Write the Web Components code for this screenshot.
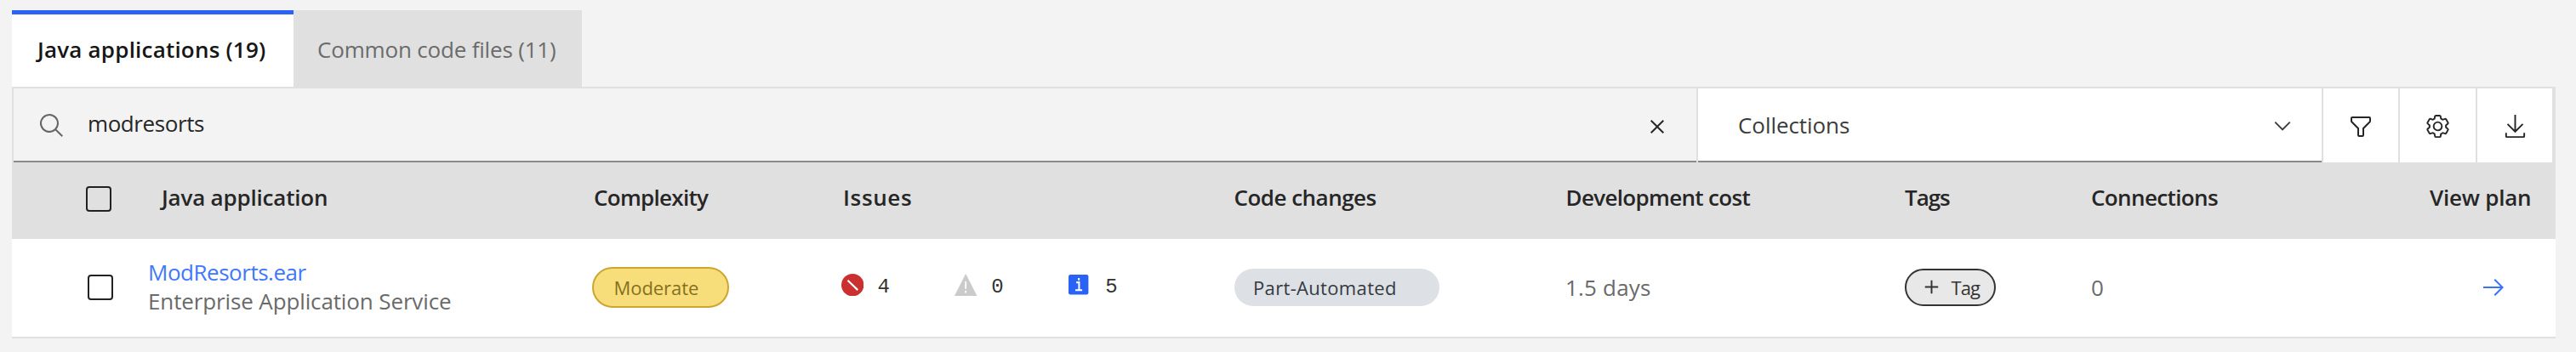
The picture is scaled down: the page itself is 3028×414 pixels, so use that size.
<!DOCTYPE html>
<html lang="en">
<head>
<meta charset="utf-8">
<title>Java applications</title>
<style>
html,body{margin:0;height:414px;background:#f3f3f3;overflow:hidden}
body{font:400 26px/36px "Open Sans","Noto Sans",sans-serif;color:#161616}
</style>
</head>
<body>
<app-panel></app-panel>
<script>
const define = (name, html, init) => {
  const t = document.createElement('template');
  t.innerHTML = html;
  customElements.define(name, class extends HTMLElement {
    constructor() {
      super();
      this.attachShadow({mode: 'open'}).append(t.content.cloneNode(true));
    }
    connectedCallback() { if (init) init(this, this.shadowRoot); }
  });
};

/* Label whose tracking is adjusted so that its ink spans the given width. */
const ctx = document.createElement('canvas').getContext('2d');
define('fit-text', `<style>:host{display:block;white-space:pre;flex:none}</style><slot></slot>`, el => {
  const cs = getComputedStyle(el), s = el.textContent;
  ctx.font = `${cs.fontWeight} ${cs.fontSize} ${cs.fontFamily}`;
  const m = ctx.measureText(s);
  const ink = m.actualBoundingBoxLeft + m.actualBoundingBoxRight;
  const w = +el.getAttribute('w');
  el.style.marginLeft = m.actualBoundingBoxLeft + 'px';
  if (s.length > 1) el.style.letterSpacing = (w - ink) / (s.length - 1) + 'px';
});

const icons = {
  search: '<path d="M29 27.586l-7.552-7.552a11.018 11.018 0 1 0-1.414 1.414L27.586 29zM4 13a9 9 0 1 1 9 9 9.01 9.01 0 0 1-9-9z"/>',
  close: '<path d="M24 9.4L22.6 8 16 14.6 9.4 8 8 9.4 14.6 16 8 22.6 9.4 24 16 17.4 22.6 24 24 22.6 17.4 16z"/>',
  chevron: '<path d="M16 22L6 12l1.4-1.4 8.6 8.6 8.6-8.6L26 12z"/>',
  filter: '<path d="M18 28h-4a2 2 0 0 1-2-2v-7.59L4.59 11A2 2 0 0 1 4 9.59V6a2 2 0 0 1 2-2h20a2 2 0 0 1 2 2v3.59a2 2 0 0 1-.59 1.41L20 18.41V26a2 2 0 0 1-2 2zM6 6v3.59l8 8V26h4v-8.41l8-8V6z"/>',
  settings: '<path d="M27 16.76V15.23l1.92-1.68A2 2 0 0 0 29.3 11L26.94 7a2 2 0 0 0-1.73-1 2 2 0 0 0-.64.1l-2.43.82a11.35 11.35 0 0 0-1.31-.75l-.51-2.52a2 2 0 0 0-2-1.61h-4.68a2 2 0 0 0-2 1.61l-.51 2.52a11.48 11.48 0 0 0-1.32.75l-2.38-.86A2 2 0 0 0 6.79 6a2 2 0 0 0-1.73 1L2.7 11a2 2 0 0 0 .41 2.51L5 15.24v1.53l-1.89 1.68A2 2 0 0 0 2.7 21l2.36 4a2 2 0 0 0 1.73 1 2 2 0 0 0 .64-.1l2.43-.82a11.35 11.35 0 0 0 1.31.75l.51 2.52a2 2 0 0 0 2 1.61h4.72a2 2 0 0 0 2-1.61l.51-2.52a11.48 11.48 0 0 0 1.32-.75l2.42.82a2 2 0 0 0 .64.1 2 2 0 0 0 1.73-1l2.28-4a2 2 0 0 0-.41-2.51zM25.21 24l-3.43-1.16a8.86 8.86 0 0 1-2.71 1.57L18.36 28h-4.72l-.71-3.55a9.36 9.36 0 0 1-2.7-1.57L6.79 24l-2.36-4 2.72-2.4a8.9 8.9 0 0 1 0-3.13L4.43 12l2.36-4 3.43 1.16a8.86 8.86 0 0 1 2.71-1.57L13.64 4h4.72l.71 3.55a9.36 9.36 0 0 1 2.7 1.57L25.21 8l2.36 4-2.72 2.4a8.9 8.9 0 0 1 0 3.13L27.57 20z"/><path d="M16 22a6 6 0 1 1 6-6 5.94 5.94 0 0 1-6 6zm0-10a3.91 3.91 0 0 0-4 4 3.91 3.91 0 0 0 4 4 3.91 3.91 0 0 0 4-4 3.91 3.91 0 0 0-4-4z"/>',
  download: '<path d="M26 24v4H6v-4H4v4a2 2 0 0 0 2 2h20a2 2 0 0 0 2-2v-4zM26 14l-1.41-1.41L17 20.17V2h-2v18.17l-7.59-7.58L6 14l10 10z"/>',
  add: '<path d="M17 15V8h-2v7H8v2h7v7h2v-7h7v-2z"/>',
  arrow: '<path d="M18 6l-1.43 1.393L24.15 15H4v2h20.15l-7.58 7.573L18 26l10-10z"/>',
  error: '<circle cx="16" cy="16" r="16" fill="#cb3030"/><path d="M9 9.4L23.4 23.2" stroke="#fff" stroke-width="2.6"/>',
  warning: '<path d="M16 .8L31.6 31.6H.4z" fill="#cbcbcb" stroke="#cbcbcb" stroke-linejoin="round"/><path d="M16 11v10.5M16 24.2v3" stroke="#fff" stroke-width="2.2"/>',
  info: '<rect x="0" y="0" width="32" height="32" rx="3" fill="#2962f5"/><path d="M12.5 12.5h4.5v12M11 25h11M16.6 5.5v3.6" stroke="#fff" stroke-width="2.8" fill="none"/>'
};
define('ui-icon', `<style>:host{display:block;flex:none}svg{display:block}</style><svg viewBox="0 0 32 32" fill="currentColor"></svg>`, (el, r) => {
  const svg = r.querySelector('svg'), s = el.getAttribute('size') || 32;
  svg.setAttribute('width', s); svg.setAttribute('height', s);
  svg.innerHTML = icons[el.getAttribute('name')];
});

define('ui-checkbox', `<style>:host{display:block;box-sizing:border-box;width:30px;height:30px;border:2px solid #222;border-radius:4px;flex:none}</style>`);

define('ui-tab', `<style>
:host{display:flex;box-sizing:border-box;height:91px;background:#e0e0e0;color:#6b6b6b;padding:28px 0 0 29px;border-top:0 solid #2b63f6}
:host([active]){background:#fff;color:#161616;font-weight:540;border-top-width:5px;padding-top:23px;padding-left:28px;height:90px}
</style><slot></slot>`);

define('ui-pill', `<style>
:host{display:flex;box-sizing:border-box;align-items:center;height:44px;border-radius:24px;font-size:22px;line-height:30px;background:#dde1e6;color:#343a3f}
:host([kind=moderate]){height:48px;background:#f7de7b;border:2px solid #cda62f;color:#85701f}
:host([kind=tag]){background:#e8e8e8;border:2px solid #333;color:#333}
</style><slot></slot>`);

define('issue-count', `<style>
:host{display:flex;align-items:center;font:24px/30px "Liberation Mono",monospace;color:#333}
.i{width:44px;margin-top:-5px;flex:none}
</style><div class="i"><slot name="icon"></slot></div><slot></slot>`);

define('tool-button', `<style>:host{display:flex;box-sizing:border-box;align-items:center;justify-content:center;background:#fff;border-left:2px solid #e0e0e0;color:#262626;padding-top:2px}</style><slot></slot>`);

define('search-bar', `<style>
:host{display:grid;grid-template-columns:1980px 735px 90px 91px 90px;height:87px;border:solid #e0e0e0;border-width:2px 4px 0 0;width:2986px;box-sizing:content-box}
.search,.collections{display:flex;box-sizing:border-box;align-items:center;border-left:2px solid #e0e0e0;position:relative}
.search{padding-left:29px;color:#262626}
.search ui-icon:first-child{color:#666;margin-top:1px}
.search fit-text{padding:0 0 5px 28px}
.close{margin:3px 30px 0 auto}
.collections{background:#fff;padding-left:48px;color:#3c3c3c}
.collections fit-text{padding-bottom:2px}
.chev{margin:0 31px 0 auto}
.line{box-shadow:inset 0 -2px #8a8a8a}
</style>
<div class="search line"><ui-icon name="search"></ui-icon><fit-text w="135">modresorts</fit-text><ui-icon class="close" name="close"></ui-icon></div>
<div class="collections line"><fit-text w="130">Collections</fit-text><ui-icon class="chev" name="chevron" size="30"></ui-icon></div>
<tool-button><ui-icon name="filter"></ui-icon></tool-button>
<tool-button><ui-icon name="settings" size="31"></ui-icon></tool-button>
<tool-button><ui-icon name="download" size="31"></ui-icon></tool-button>`);

define('table-head', `<style>
:host{display:grid;grid-template-columns:174px 511px 294px 458.5px 391px 396.5px 220px 397px 148px;box-sizing:border-box;height:90px;background:#e0e0e0;padding-top:23px;font-weight:580;color:#262626}
ui-checkbox{margin:5px 0 0 87px}
</style><ui-checkbox></ui-checkbox>
<div><fit-text w="196">Java application</fit-text></div>
<div><fit-text w="134">Complexity</fit-text></div>
<div><fit-text w="78">Issues</fit-text></div>
<div><fit-text w="166">Code changes</fit-text></div>
<div><fit-text w="215">Development cost</fit-text></div>
<div><fit-text w="53">Tags</fit-text></div>
<div><fit-text w="148">Connections</fit-text></div>
<div><fit-text w="118">View plan</fit-text></div>`);

define('table-row', `<style>
:host{display:grid;grid-template-columns:162px 519.5px 293px 462.5px 391px 396.5px 220.5px 459px 86px;box-sizing:border-box;height:117px;background:#fff;border-bottom:2px solid #e0e0e0;padding-bottom:2px;align-items:center;color:#6a6a6a}
ui-checkbox{margin-left:89px}
.name{line-height:34px;padding-bottom:2px}.link{color:#4178fb}
.issues{display:grid;grid-template-columns:133.7px 134px 133px}
.arrow{color:#3a72f8;margin-left:-3px}
</style><ui-checkbox></ui-checkbox>
<div class="name"><fit-text class="link" w="184.5">ModResorts.ear</fit-text><fit-text w="354">Enterprise Application Service</fit-text></div>
<ui-pill kind="moderate" style="width:161px;padding-left:26px"><fit-text w="97.5">Moderate</fit-text></ui-pill>
<div class="issues">
<issue-count><ui-icon slot="icon" name="error" size="26.4"></ui-icon><fit-text w="12">4</fit-text></issue-count>
<issue-count><ui-icon slot="icon" name="warning" size="26.4"></ui-icon><fit-text w="12">0</fit-text></issue-count>
<issue-count><ui-icon slot="icon" name="info" size="23.4"></ui-icon><fit-text w="12">5</fit-text></issue-count>
</div>
<ui-pill style="width:241px;padding-left:24px"><fit-text w="165">Part-Automated</fit-text></ui-pill>
<div><fit-text w="98">1.5 days</fit-text></div>
<ui-pill kind="tag" style="width:107px;padding-left:14px"><ui-icon name="add" size="31"></ui-icon><div style="padding-left:8px"><fit-text w="34.5">Tag</fit-text></div></ui-pill>
<div><fit-text w="13">0</fit-text></div>
<ui-icon class="arrow" name="arrow"></ui-icon>`);

define('app-panel', `<style>
:host{display:block;box-sizing:border-box;width:2990px;margin-left:14px;padding-top:12px}
.tabs{display:flex;height:90px;align-items:flex-start}
</style>
<div class="tabs"><ui-tab active style="width:331px"><fit-text w="270">Java applications (19)</fit-text></ui-tab><ui-tab style="width:339px"><fit-text w="279">Common code files (11)</fit-text></ui-tab></div>
<search-bar></search-bar>
<table-head></table-head>
<table-row></table-row>`);
</script>
</body>
</html>
